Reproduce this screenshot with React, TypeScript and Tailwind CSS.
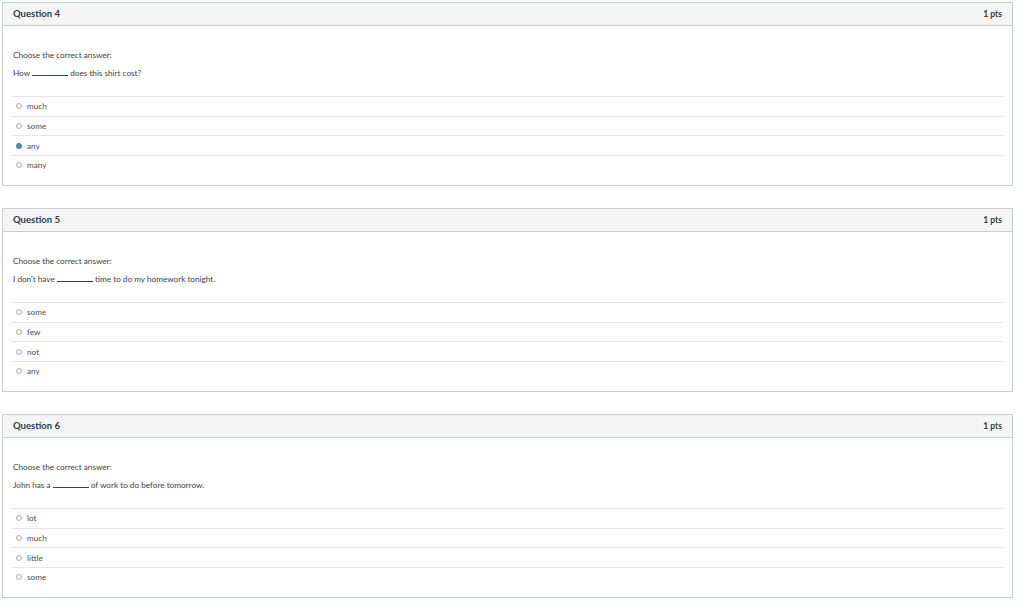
const questions = [
  {
    n: 4,
    before: "How",
    after: "does this shirt cost?",
    options: ["much", "some", "any", "many"],
    selected: 2,
  },
  {
    n: 5,
    before: "I don't have",
    after: "time to do my homework tonight.",
    options: ["some", "few", "not", "any"],
    selected: -1,
  },
  {
    n: 6,
    before: "John has a",
    after: "of work to do before tomorrow.",
    options: ["lot", "much", "little", "some"],
    selected: -1,
  },
];

function Radio({ checked }: { checked: boolean }) {
  return checked ? (
    <span className="w-[6px] h-[6px] rounded-full bg-[#4a8fd0] border border-[#3478b8] shrink-0" />
  ) : (
    <span className="w-[6px] h-[6px] rounded-full bg-white border border-[#a9afb4] shrink-0" />
  );
}

export default function App() {
  return (
    <div className="w-[1024px] h-[603px] bg-white pt-[2px] px-[2px] flex flex-col gap-[22px] text-[#3c4146] font-['Lato','Open_Sans',sans-serif]">
      {questions.map((q) => (
        <div key={q.n} className="w-[1011px] h-[184px] border border-[#c7cdd1] flex flex-col">
          <div className="h-[23px] shrink-0 bg-[#f5f5f5] border-b border-[#c7cdd1] flex items-center justify-between px-[10px]">
            <span className="text-[9.5px] font-bold text-[#2d3b45]">Question {q.n}</span>
            <span className="text-[8.5px] font-bold text-[#2d3b45]">1 pts</span>
          </div>
          <div className="px-[10px] pt-[24px]">
            <p className="text-[8.2px] leading-[10px]">Choose the correct answer:</p>
            <p className="text-[8.2px] leading-[10px] mt-[8px]">
              {q.before} <span className="inline-block w-[36px] border-b border-[#3c4146] h-[7px] align-baseline" /> {q.after}
            </p>
          </div>
          <div className="mx-[9px] mt-[18px] flex flex-col">
            {q.options.map((o, i) => (
              <div key={o} className="h-[19.7px] border-t border-[#e3e5e7] flex items-center gap-[5px] pl-[4px]">
                <Radio checked={i === q.selected} />
                <span className="text-[8.2px] text-[#4a4f54]">{o}</span>
              </div>
            ))}
          </div>
        </div>
      ))}
    </div>
  );
}
